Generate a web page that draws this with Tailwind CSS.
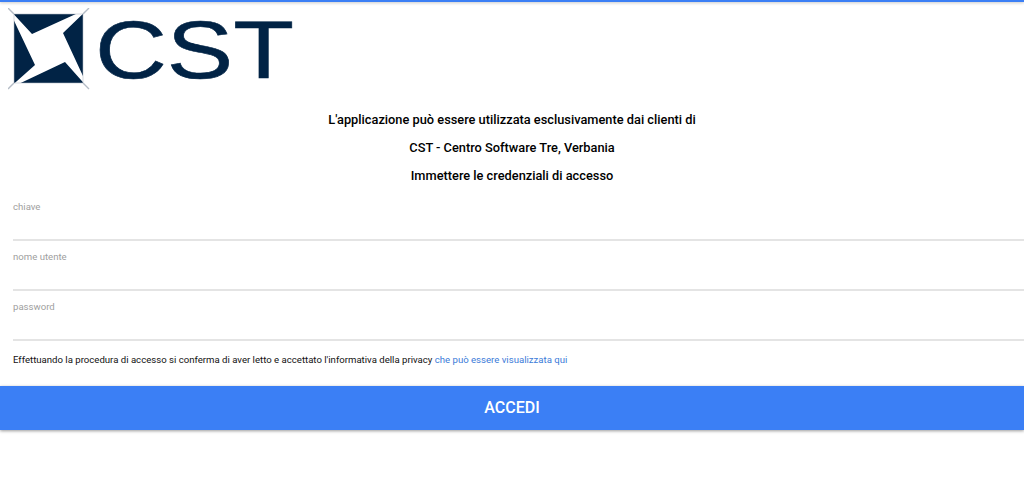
<!DOCTYPE html>
<html lang="en">

<head>
    <meta charset="UTF-8">
    <meta name="viewport" content="width=device-width, initial-scale=1.0">
    <title>CST</title>
    <script src="https://cdn.jsdelivr.net/npm/@tailwindcss/browser@4"></script>
</head>

<body class="bg-white font-['Roboto',sans-serif] text-black h-[500px] overflow-hidden">
    <div class="h-0.5 bg-[#3b7ff5] shadow-[0_1px_3px_rgba(0,0,0,0.25)]"></div>

    <!-- logo -->
    <div class="h-[90px] pl-2 pt-1.5">
        <svg width="320" height="84" viewBox="8 8 320 84" class="block">
            <rect x="14" y="14" width="69" height="69" fill="#012345" />
            <path d="M8 8 32 34 89 8 63 33 89 89 65 62 8 89 35 65Z" fill="#fff" />
            <path d="M8 8 14 14M89 8 83 14M8 89 14 83M89 89 83 83" stroke="#b4bcc6" stroke-width="1.4" />
            <path d="M14 14H83V83H14Z" fill="none" stroke="#b4bcc6" stroke-width="0.8" opacity="0.7" />
            <text x="95" y="78" textLength="199" lengthAdjust="spacingAndGlyphs" font-family="Liberation Sans" font-size="82" fill="#012345" stroke="#012345" stroke-width="0.6">CST</text>
        </svg>
    </div>

    <div class="flex flex-col items-center gap-2 pt-[18px] text-[12.8px] font-medium leading-5">
        <p>L'applicazione può essere utilizzata esclusivamente dai clienti di</p>
        <p>CST - Centro Software Tre, Verbania</p>
        <p>Immettere le credenziali di accesso</p>
    </div>

    <form class="pl-[13px] pt-[5px]">
        <label class="block h-[50px] border-b-2 border-[#e4e4e4] pt-[9px] text-[9.6px] leading-[14px] text-[#a0a0a0]">chiave</label>
        <label class="block h-[50px] border-b-2 border-[#e4e4e4] pt-[9px] text-[9.6px] leading-[14px] text-[#a0a0a0]">nome utente</label>
        <label class="block h-[50px] border-b-2 border-[#e4e4e4] pt-[9px] text-[9.6px] leading-[14px] text-[#a0a0a0]">password</label>
        <p class="pt-3 text-[9.6px] leading-[14px] text-[#111]">Effettuando la procedura di accesso si conferma di aver letto e accettato l'informativa della privacy <a href="#" class="text-[#3b7bd9]">che può essere visualizzata qui</a></p>
    </form>

    <button class="mt-[19px] block h-[44px] w-full bg-[#3b7ff5] text-base font-medium text-white shadow-[0_1px_3px_rgba(0,0,0,0.4)]">ACCEDI</button>
</body>

</html>
